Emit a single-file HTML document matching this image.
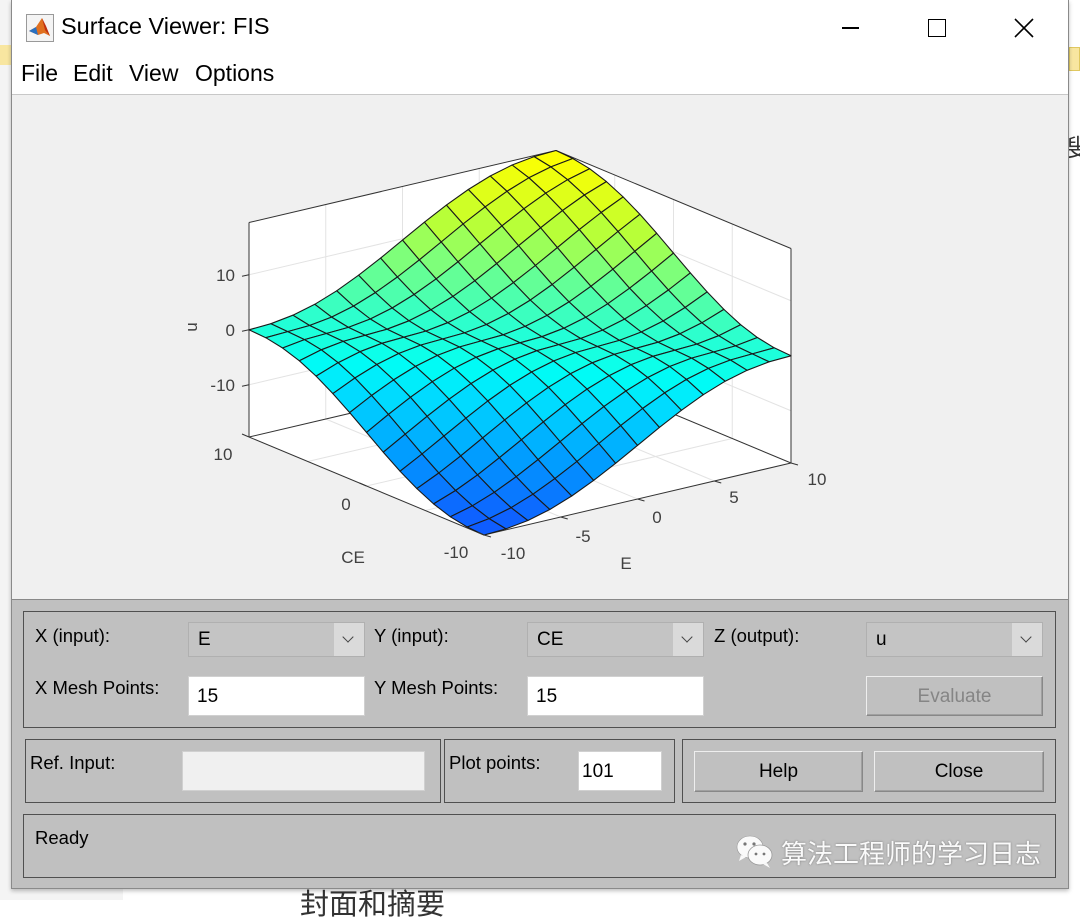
<!DOCTYPE html>
<html><head><meta charset="utf-8"><style>
*{margin:0;padding:0;box-sizing:border-box}
body{width:1080px;height:900px;background:#fff;position:relative;overflow:hidden;font-family:"Liberation Sans","Noto Sans CJK SC",sans-serif}
.abs{position:absolute}
#win{left:11px;top:0;width:1058px;height:889px;background:#c0c0c0;border:1px solid #8a8a8a;border-top:none;box-shadow:0 2px 4px rgba(0,0,0,.25)}
.lbl{position:absolute;font-size:18.5px;color:#000}
.panel{position:absolute;border:1.5px solid #505050}
.dd{position:absolute;height:35px;background:#c4c4c4;border:1px solid #b0b0b0;font-size:19px;padding:6px 0 0 9px}
.dd .ar{position:absolute;right:0;top:0;width:30px;height:33px;background:#dadada}
.dd .ar:after{content:"";position:absolute;left:10px;top:10px;width:7px;height:7px;border-right:1.3px solid #444;border-bottom:1.3px solid #444;transform:rotate(45deg)}
.inp{position:absolute;background:#fff;border:1px solid #d0d0d0;font-size:19px;padding:9px 0 0 8px}
.btn{position:absolute;background:#c0c0c0;border:1px solid #888;border-top-color:#eee;border-left-color:#eee;box-shadow:inset -1px -1px 0 #a0a0a0;font-size:19px;text-align:center;padding-top:9px}
.mi{position:absolute;top:60px;font-size:23px;color:#000}
</style></head><body>
<div class="abs" style="left:0;top:0;width:123px;height:900px;background:#f4f4f4"></div>
<div class="abs" style="left:0;top:45px;width:11px;height:20px;background:#f8e6a0"></div>
<div class="abs" style="left:1069px;top:47px;width:11px;height:24px;background:#f8e6a0;border:1px solid #e0c860"></div>
<div class="abs" style="left:1066px;top:128px;font-size:24px;color:#333">叟</div>
<div class="abs" style="left:300px;top:889px;font-size:29px;color:#333;line-height:32px">封面和摘要</div>
<div id="win" class="abs">
 <div class="abs" style="left:0;top:0;width:1056px;height:95px;background:#fff;border-bottom:1px solid #c8c8c8"></div>
 <svg class="abs" style="left:14px;top:14px" width="28" height="28" viewBox="0 0 28 28">
  <rect x="0.5" y="0.5" width="27" height="27" fill="#f4f4f4" stroke="#999"/>
  <path d="M3 17 L10 13 L16 4 L24 22 L18 19 L12 21 Z" fill="#e07020"/>
  <path d="M3 17 L10 13 L12 21 Z" fill="#2a70c0"/>
  <path d="M16 4 L20 12 L24 22 L19 16 Z" fill="#c03010"/>
 </svg>
 <div class="abs" style="left:49px;top:13px;font-size:23.5px;color:#000">Surface Viewer: FIS</div>
 <div class="abs" style="left:830px;top:27px;width:17px;height:1.5px;background:#000"></div>
 <div class="abs" style="left:916px;top:19px;width:18px;height:18px;border:1.5px solid #000"></div>
 <svg class="abs" style="left:1002px;top:18px" width="20" height="20"><path d="M1 1L19 19M19 1L1 19" stroke="#000" stroke-width="1.6"/></svg>
 <div class="mi" style="left:9px">File</div>
 <div class="mi" style="left:61px">Edit</div>
 <div class="mi" style="left:117px">View</div>
 <div class="mi" style="left:183px">Options</div>
 <div class="abs" style="left:0;top:95px;width:1056px;height:505px;background:#f0f0f0;border-bottom:1px solid #888"></div>
 <svg id="plot" class="abs" style="left:-11px;top:0" width="1080" height="600"></svg>

 <div class="panel" style="left:11px;top:611px;width:1033px;height:117px"></div>
 <div class="lbl" style="left:23px;top:625px">X (input):</div>
 <div class="dd" style="left:176px;top:622px;width:177px">E<div class="ar"></div></div>
 <div class="lbl" style="left:362px;top:625px">Y (input):</div>
 <div class="dd" style="left:515px;top:622px;width:177px">CE<div class="ar"></div></div>
 <div class="lbl" style="left:702px;top:625px">Z (output):</div>
 <div class="dd" style="left:854px;top:622px;width:177px">u<div class="ar"></div></div>
 <div class="lbl" style="left:23px;top:677px">X Mesh Points:</div>
 <div class="inp" style="left:176px;top:676px;width:177px;height:40px">15</div>
 <div class="lbl" style="left:362px;top:677px">Y Mesh Points:</div>
 <div class="inp" style="left:515px;top:676px;width:177px;height:40px">15</div>
 <div class="btn" style="left:854px;top:676px;width:177px;height:40px;color:#858585">Evaluate</div>

 <div class="panel" style="left:13px;top:739px;width:416px;height:64px"></div>
 <div class="lbl" style="left:18px;top:752px">Ref. Input:</div>
 <div class="inp" style="left:170px;top:751px;width:243px;height:40px;background:#f0f0f0"></div>
 <div class="panel" style="left:432px;top:739px;width:231px;height:64px"></div>
 <div class="lbl" style="left:437px;top:752px">Plot points:</div>
 <div class="inp" style="left:566px;top:751px;width:84px;height:40px;padding-left:3px">101</div>
 <div class="panel" style="left:670px;top:739px;width:374px;height:64px"></div>
 <div class="btn" style="left:682px;top:751px;width:169px;height:41px">Help</div>
 <div class="btn" style="left:862px;top:751px;width:170px;height:41px">Close</div>

 <div class="panel" style="left:11px;top:814px;width:1033px;height:64px"></div>
 <div class="lbl" style="left:23px;top:827px">Ready</div>
 <svg class="abs" style="left:723px;top:834px" width="40" height="36" viewBox="0 0 40 36">
  <ellipse cx="15" cy="13" rx="13" ry="11" fill="#fafafa" stroke="#999" stroke-width=".6"/>
  <path d="M6 21 L4 27 L11 23Z" fill="#fafafa"/>
  <ellipse cx="25" cy="21" rx="12" ry="10" fill="#fafafa" stroke="#999" stroke-width=".8"/>
  <path d="M32 29 L35 34 L28 30Z" fill="#fafafa"/>
  <circle cx="10" cy="10" r="1.6" fill="#777"/><circle cx="19" cy="10" r="1.6" fill="#777"/>
  <circle cx="21" cy="20" r="1.4" fill="#777"/><circle cx="29" cy="20" r="1.4" fill="#777"/>
 </svg>
 <div class="abs" style="left:769px;top:834px;font-size:26px;color:#fafafa;text-shadow:0 0 2px #777">算法工程师的学习日志</div>
</div>
<script>
(function(){
var svg=document.getElementById('plot');var NS='http://www.w3.org/2000/svg';
function P(x,y,z){return [483+(x+10)*15.35-(y+10)*11.75, 535-(x+10)*3.6-(y+10)*4.9-(z+19.5)*5.5];}
function el(t,a,txt){var e=document.createElementNS(NS,t);for(var k in a)e.setAttribute(k,a[k]);if(txt!=null)e.textContent=txt;svg.appendChild(e);return e;}
function pts(a){return a.map(function(p){return p[0].toFixed(1)+','+p[1].toFixed(1)}).join(' ');}
function line(a,b,c,w){el('line',{x1:a[0],y1:a[1],x2:b[0],y2:b[1],stroke:c,'stroke-width':w||1});}
var zt=19.5,zb=-19.5;
el('polygon',{points:pts([P(-10,10,zb),P(10,10,zb),P(10,10,zt),P(-10,10,zt)]),fill:'#fff'});
el('polygon',{points:pts([P(10,-10,zb),P(10,10,zb),P(10,10,zt),P(10,-10,zt)]),fill:'#fff'});
el('polygon',{points:pts([P(-10,-10,zb),P(10,-10,zb),P(10,10,zb),P(-10,10,zb)]),fill:'#fff'});
var g='#e3e3e3';
[-10,0,10].forEach(function(z){line(P(-10,10,z),P(10,10,z),g);line(P(10,-10,z),P(10,10,z),g);});
[-5,0,5].forEach(function(v){line(P(v,10,zb),P(v,10,zt),g);line(P(10,v,zb),P(10,v,zt),g);line(P(v,-10,zb),P(v,10,zb),g);line(P(-10,v,zb),P(10,v,zb),g);});
var d='#333';
line(P(-10,10,zb),P(10,10,zb),d);line(P(10,-10,zb),P(10,10,zb),d);
line(P(-10,10,zt),P(10,10,zt),d);line(P(10,-10,zt),P(10,10,zt),d);
line(P(-10,10,zb),P(-10,10,zt),d);line(P(10,-10,zb),P(10,-10,zt),d);
line(P(-10,-10,zb),P(10,-10,zb),d);line(P(-10,-10,zb),P(-10,10,zb),d);
function f(x,y){var s=x+y,t=Math.min(1,Math.abs(s)/20);var v1=t*t*t*(10-15*t+6*t*t),v2=t*t*(3-2*t);var v=0.5*v1+0.5*v2;return (s<0?-1:1)*19.5*v;}
var stops=[[0,[16,90,255]],[0.2,[0,160,255]],[0.38,[0,225,255]],[0.46,[0,255,245]],[0.53,[50,255,200]],[0.66,[110,255,140]],[0.82,[190,255,50]],[1,[255,255,0]]];
function col(z){var t=Math.max(0,Math.min(1,(z+19.5)/39));for(var i=1;i<stops.length;i++){if(t<=stops[i][0]){var a=stops[i-1],b=stops[i],u=(t-a[0])/(b[0]-a[0]);return 'rgb('+[0,1,2].map(function(k){return Math.round(a[1][k]+(b[1][k]-a[1][k])*u)}).join(',')+')';}}return 'rgb(255,255,0)';}
var N=14,h=20/N,cells=[];
for(var i=0;i<N;i++)for(var j=0;j<N;j++){var x0=-10+i*h,y0=-10+j*h;cells.push([x0,y0,x0+y0]);}
cells.sort(function(a,b){return b[2]-a[2];});
cells.forEach(function(c){var x0=c[0],y0=c[1],x1=x0+h,y1=y0+h;
 var z=[f(x0,y0),f(x1,y0),f(x1,y1),f(x0,y1)];var zm=(z[0]+z[1]+z[2]+z[3])/4;
 el('polygon',{points:pts([P(x0,y0,z[0]),P(x1,y0,z[1]),P(x1,y1,z[2]),P(x0,y1,z[3])]),fill:col(zm),stroke:'#1a1a1a','stroke-width':'1.1','stroke-linejoin':'round'});});
var tc='#404040',fs=17;
function txt(x,y,s,anchor){el('text',{x:x,y:y,'font-size':fs,fill:tc,'text-anchor':anchor||'middle','font-family':'Liberation Sans, sans-serif'},s);}
[[10,'10'],[0,'0'],[-10,'-10']].forEach(function(t){var p=P(-10,10,t[0]);line(p,[p[0]-7,p[1]+1.5],d);txt(p[0]-14,p[1]+6,t[1],'end');});
[[10,'10'],[0,'0'],[-10,'-10']].forEach(function(t){var p=P(-10,t[0],zb);line(p,[p[0]-7,p[1]-3],d);});
txt(222,460,'10');txt(345,510,'0');txt(455,558,'-10');txt(352,563,'CE');
[-10,-5,0,5,10].forEach(function(v){var p=P(v,-10,zb);line(p,[p[0]+7,p[1]+2],d);});
txt(512,559,'-10');txt(582,542,'-5');txt(656,523,'0');txt(733,503,'5');txt(816,485,'10');txt(625,569,'E');
el('text',{x:0,y:0,'font-size':fs,fill:tc,'text-anchor':'middle','font-family':'Liberation Sans, sans-serif',transform:'translate(196,327) rotate(-90)'},'u');
})();
</script>
</body></html>
